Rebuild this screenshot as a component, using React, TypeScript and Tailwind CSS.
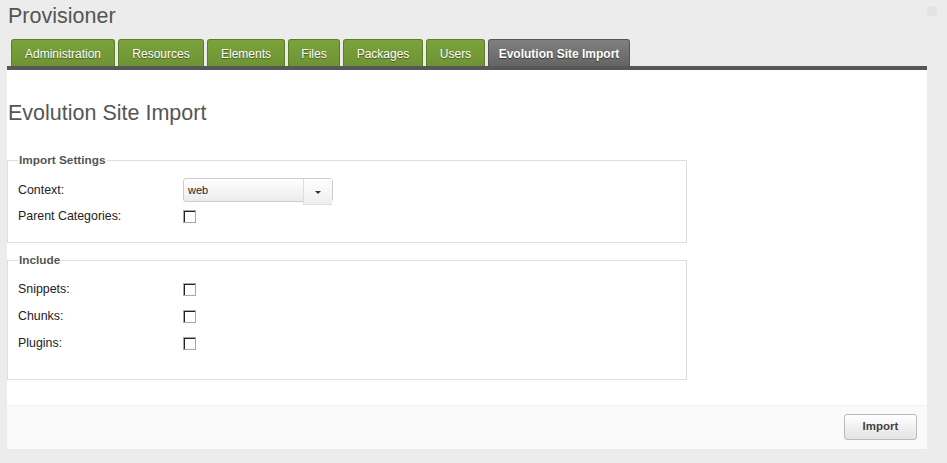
import React from "react";

const tabs: { label: string; w: string }[] = [
  { label: "Administration", w: "w-[104px]" },
  { label: "Resources", w: "w-[86px]" },
  { label: "Elements", w: "w-[78px]" },
  { label: "Files", w: "w-[52px]" },
  { label: "Packages", w: "w-[80px]" },
  { label: "Users", w: "w-[59px]" },
];

function Checkbox() {
  return (
    <div className="w-[13px] h-[13px] border border-[#aca899] bg-white">
      <div className="w-full h-full border-t border-l border-[#222]" />
    </div>
  );
}

function Row({ label, children }: { label: string; children: React.ReactNode }) {
  return (
    <div className="flex items-center h-[24px]">
      <div className="w-[165px] text-[12.4px] text-[#222]">{label}</div>
      {children}
    </div>
  );
}

function ContextSelect() {
  return (
    <div className="relative flex h-[24px] w-[150px] rounded-[3px] border border-[#ccc] bg-gradient-to-b from-white to-[#ececec]">
      <div className="flex-1 pl-[4px] pt-[3px] text-[11px] text-[#222]">web</div>
      <div className="w-[29px] h-[26px] -mb-[3px] border-l border-b border-[#ddd] bg-gradient-to-b from-white to-[#efefef] flex items-center justify-center">
        <div className="w-0 h-0 border-l-[3px] border-r-[3px] border-t-[3px] border-l-transparent border-r-transparent border-t-[#333] mt-[1px]" />
      </div>
    </div>
  );
}

export default function App() {
  return (
    <div
      className="relative min-h-[463px] bg-[#ececec] overflow-hidden"
      style={{ fontFamily: '"Liberation Sans", Arial, sans-serif' }}
    >
      {/* corner widget */}
      <div className="absolute right-[10px] top-[6px] w-[10px] h-[10px] rounded-[3px] bg-[#e3e3e3]" />

      <div className="h-[39px] pl-[8px] pt-[3px] text-[21.5px] leading-[26px] text-[#555]">Provisioner</div>

      {/* tab strip */}
      <div className="flex items-end gap-[3px] pl-[11px] h-[27px]">
        {tabs.map((t) => (
          <div
            key={t.label}
            className={
              t.w +
              " h-[27px] pt-[1px] flex items-center justify-center rounded-t-[3px] border border-b-0 border-[#5c7e27] bg-gradient-to-b from-[#7ba23c] to-[#6f9334] text-white text-[12px] [text-shadow:0_1px_1px_rgba(0,0,0,0.45)]"
            }
          >
            {t.label}
          </div>
        ))}
        <div className="w-[142px] h-[27px] pt-[1px] flex items-center justify-center rounded-t-[3px] border border-b-0 border-[#555] bg-gradient-to-b from-[#808080] to-[#646464] text-white text-[12px] font-bold [text-shadow:0_1px_1px_rgba(0,0,0,0.5)]">
          Evolution Site Import
        </div>
      </div>

      {/* main panel */}
      <div className="ml-[7px] w-[920px] border-t-4 border-[#575757] bg-white">
        <div className="pt-[31px] pl-[1px] text-[21.5px] leading-[25px] text-[#555]">Evolution Site Import</div>

        <fieldset className="mt-[27px] w-[680px] border border-[#ddd] pl-[10px] pb-[14px]">
          <legend className="px-[1px] text-[11.8px] leading-[14px] font-bold text-[#555]">Import Settings</legend>
          <div className="pt-[11px] flex flex-col gap-[2px]">
            <Row label="Context:">
              <ContextSelect />
            </Row>
            <Row label="Parent Categories:">
              <Checkbox />
            </Row>
          </div>
        </fieldset>

        <fieldset className="mt-[10px] w-[680px] border border-[#ddd] pl-[10px] pb-[24px]">
          <legend className="px-[1px] text-[11.8px] leading-[14px] font-bold text-[#555]">Include</legend>
          <div className="pt-[10px] flex flex-col gap-[3px]">
            <Row label="Snippets:">
              <Checkbox />
            </Row>
            <Row label="Chunks:">
              <Checkbox />
            </Row>
            <Row label="Plugins:">
              <Checkbox />
            </Row>
          </div>
        </fieldset>

        <div className="mt-[25px] border-t border-[#f0f0f0] bg-[#fafafa] flex justify-end pr-[10px] pt-[8px] pb-[9px]">
          <button className="w-[73px] h-[26px] rounded-[3px] border border-[#bbb] bg-gradient-to-b from-white to-[#e3e3e3] text-[11.5px] font-bold text-[#444]">
            Import
          </button>
        </div>
      </div>
    </div>
  );
}
